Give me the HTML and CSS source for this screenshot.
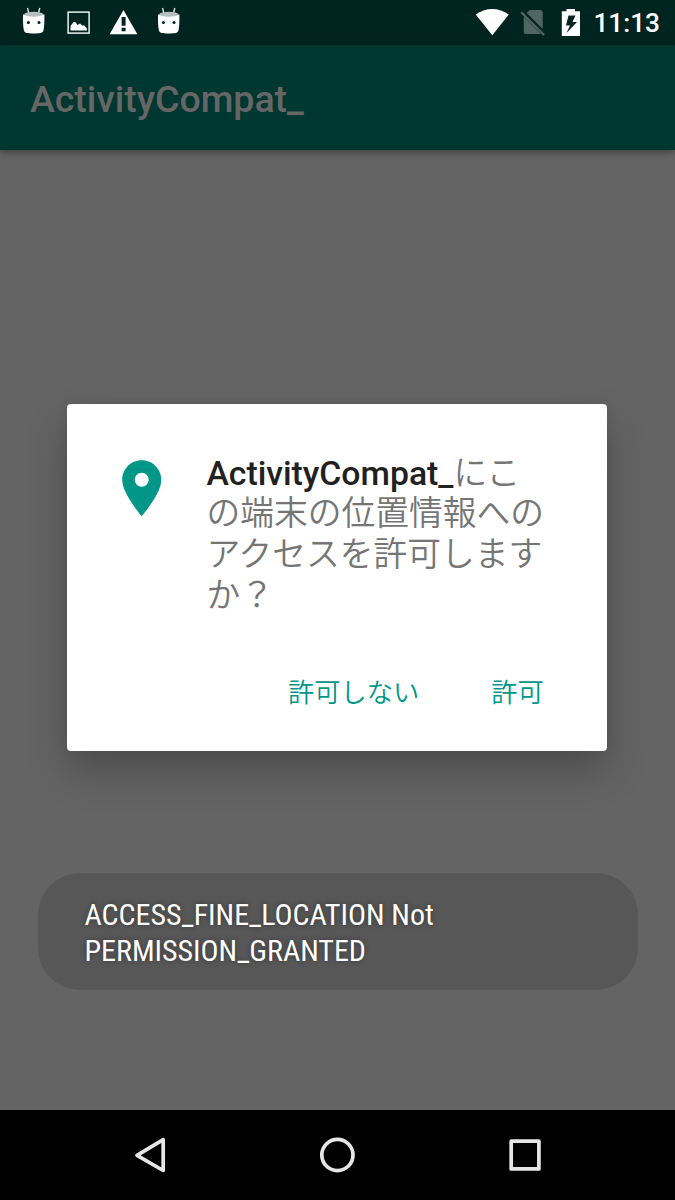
FILE: index.html
```html
<!DOCTYPE html>
<html lang="ja">
<head>
<meta charset="utf-8">
<title>ActivityCompat_</title>
<link rel="stylesheet" href="styles.css">
</head>
<body>
<div class="screen">
  <header class="status">
    <svg class="status-icons" width="200" height="45" viewBox="0 0 200 45">
      <defs>
        <g id="droid">
          <path d="M27.500 8l1.500 5.700M39.800 8l-1.500 5.700" stroke="#dce2e1" stroke-width="1.400" fill="none"/>
          <path d="M23 14.500c0 6-.1 11 .8 15.500.7 3.200 3.500 3.400 9.900 3.400s9.200-.2 9.900-3.400c.9-4.500.8-9.500.8-15.500z" fill="#fff"/>
          <ellipse cx="33.700" cy="14.200" rx="9.400" ry="2.500" fill="#b5bfbd"/>
          <circle cx="28.400" cy="22.500" r="1.500" fill="#00241f"/>
          <circle cx="39" cy="22.500" r="1.500" fill="#00241f"/>
        </g>
      </defs>
      <use href="#droid"/>
      <rect x="68.100" y="12.100" width="21" height="21" fill="none" stroke="#fff" stroke-width="1.400"/>
      <path d="M70.500 30.500v-4.500l3-3.700c1-.6 1.800-.5 2.500.5l1.500 2.100 2.500-1.400 2.300 2 1.700-.2 2.800 3v2.200z" fill="#fff"/>
      <path fill-rule="evenodd" d="M123.500 10L137.400 34.300H109.600zM121.600 17v8.800h4V17zM121.600 27.800v3.500h4v-3.500z" fill="#fff"/>
      <use href="#droid" x="135"/>
    </svg>
    <div class="status-right">
      <svg width="116" height="45" viewBox="470 0 116 45">
        <path d="M475.700 14.500C485.500 7 499 7 508.800 14.500L492.300 35.300z" fill="#fff"/>
        <path d="M529.800 10h10.500c1.500 0 2.400 1 2.400 2.400V29L526.600 13zM523.800 16.500L541 33.900H525.700c-1.200 0-1.900-.8-1.900-2z" fill="#4f6663"/>
        <path d="M521.300 12.200L544 35.100" stroke="#4f6663" stroke-width="2.200"/>
        <path fill-rule="evenodd" d="M566.500 9h8.500v2.300h5V36h-18.200V11.300h4.700zM568.500 15.500L566 25.500h4l-3.500 7.500L577 22h-4.500l3-6.500z" fill="#fff"/>
      </svg>
      <span class="clock">11:13</span>
    </div>
  </header>
  <div class="appbar"><h1 class="title">ActivityCompat_</h1></div>
  <main class="content">
    <div class="toast"><span class="toast-text">ACCESS_FINE_LOCATION Not<br>PERMISSION_GRANTED</span></div>
  </main>
  <nav class="navbar">
    <svg width="675" height="90" viewBox="0 0 675 90" fill="none" stroke="#e6e6e6" stroke-width="3.700" stroke-linejoin="round">
      <path d="M163.200 29.700V60.500L137 45.300z"/>
      <circle cx="337.400" cy="45" r="15.600"/>
      <rect x="511.200" y="31.200" width="27.700" height="27.700"/>
    </svg>
  </nav>
  <section class="dialog" role="dialog">
    <div class="dialog-body">
      <svg class="pin" width="40" height="57" viewBox="0 0 40 57"><path fill-rule="evenodd" d="M19.700.2C8.700.2.200 9 .200 19.800.200 34 19.700 56.200 19.700 56.200S39.300 34 39.300 19.800C39.300 9 30.700.2 19.700.2zM19.700 12.800a7 7 0 1 1 0 14 7 7 0 0 1 0-14z" fill="#009688"/></svg>
      <p class="message"><b>ActivityCompat_</b>にこ<br>の端末の位置情報への<br>アクセスを許可します<br>か？</p>
    </div>
    <div class="actions"><button class="action">許可しない</button><button class="action">許可</button></div>
  </section>
</div>
</body>
</html>
```
FILE: styles.css
```css
* { box-sizing: border-box; }
body { margin: 0; font-family: Roboto, "Noto Sans CJK JP", sans-serif; }
.screen { position: relative; display: flex; flex-direction: column; width: 675px; height: 1200px; overflow: hidden; background: #646464; }
.status { display: flex; justify-content: space-between; height: 45px; background: #00241f; }
.status-right { display: flex; align-items: center; padding-right: 15px; gap: 7px; }
.clock { color: #fff; font-size: 26.25px; font-weight: 500; line-height: 45px; padding-top: 1px; }
.appbar { position: relative; display: flex; align-items: center; height: 105px; padding: 3px 30px 0; background: #003730; box-shadow: 0 2px 7px rgba(0,0,0,.4); }
.title { margin: 0; color: #666; font-size: 37.5px; font-weight: 500; line-height: 44px; letter-spacing: -.05px; }
.content { flex: 1; display: flex; flex-direction: column; justify-content: flex-end; padding: 0 37.5px 120px; }
.toast { height: 117.5px; padding: 24px 47px; border-radius: 42px; background: #575757; }
.toast-text { display: inline-block; color: #fff; font-family: "Roboto Condensed", Roboto, sans-serif; font-size: 30px; line-height: 36px; letter-spacing: -.02px; white-space: nowrap; text-shadow: 0 0 5px rgba(0,0,0,.4); }
.navbar { height: 90px; background: #000; }
.navbar svg { display: block; }
.dialog { position: absolute; left: 67.4px; top: 403.7px; width: 540px; height: 347.3px; display: flex; flex-direction: column; border-radius: 4px; background: #fff; box-shadow: 0 20px 40px rgba(0,0,0,.24), 0 0 12px rgba(0,0,0,.06); }
.dialog-body { flex: 1; display: flex; align-items: flex-start; gap: 44px; padding: 50px 44px 0 55px; }
.pin { flex: none; margin-top: 6px; }
.message { margin: 0; color: #757575; font-size: 33.75px; font-weight: 350; line-height: 40.8px; white-space: nowrap; }
.message b { color: #212121; font-weight: 500; }
.actions { display: flex; justify-content: flex-end; gap: 72px; padding: 0 63.7px 39px 0; }
.action { border: 0; padding: 0; background: none; color: #009688; font: 350 26.25px/38px Roboto, "Noto Sans CJK JP", sans-serif; }
```
